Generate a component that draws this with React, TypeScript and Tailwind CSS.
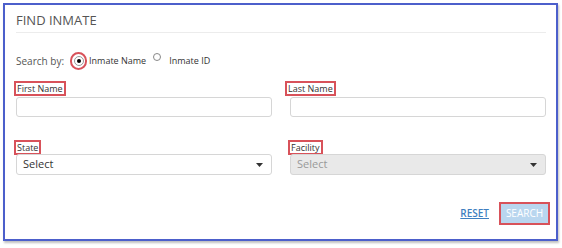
import React from "react";

const font = { fontFamily: '"Open Sans", "Noto Sans", sans-serif' };

const Caret = () => (
  <svg width="7" height="4" viewBox="0 0 7 4" className="shrink-0">
    <path d="M0 0 H7 L3.5 4 Z" fill="#333" />
  </svg>
);

const Label = ({ text }: { text: string }) => (
  <div className="flex">
    <span className="-ml-[2px] border-2 border-[#d8525a] px-[1px] text-[9px] leading-[11px] text-[#333]">
      {text}
    </span>
  </div>
);

export default function App() {
  return (
    <div className="h-[248px] w-[562px] bg-white pl-[3px] pt-[3px]" style={font}>
      <div className="flex h-[238px] w-[555px] flex-col border-2 border-[#4c5fcb] pl-[11px] pr-[10px] shadow-[1px_2px_2px_rgba(0,0,0,0.25)]">
        <div className="flex h-[28px] items-end border-b border-[#ececec] pb-[4px] text-[13px] leading-[16px] text-[#555]">
          FIND INMATE
        </div>

        <div className="mt-[19px] flex h-[18px] items-center text-[10px] text-[#555]">
          <span>Search by:</span>
          <span className="ml-[6px] flex h-[18px] w-[17px] items-center justify-center rounded-full border-2 border-[#d8525a]">
            <span className="flex h-[10px] w-[10px] items-center justify-center rounded-full border border-[#999] bg-white">
              <span className="h-[4px] w-[4px] rounded-full bg-black" />
            </span>
          </span>
          <span className="ml-[2px] text-[9px] text-[#333]">Inmate Name</span>
          <span className="mb-[9px] ml-[7px] h-[8px] w-[8px] rounded-full border border-[#888]" />
          <span className="ml-[8px] text-[9px] text-[#333]">Inmate ID</span>
        </div>

        <div className="mt-[11px] grid grid-cols-2 gap-x-[18px]">
          <div className="flex flex-col">
            <Label text="First Name" />
            <div className="mt-[1px] h-[20px] rounded-[3px] border border-[#d6d6d6] bg-white" />
          </div>
          <div className="flex flex-col">
            <div className="-ml-[3px]">
              <Label text="Last Name" />
            </div>
            <div className="mt-[1px] h-[20px] rounded-[3px] border border-[#d6d6d6] bg-white" />
          </div>
        </div>

        <div className="mt-[23px] grid grid-cols-2 gap-x-[18px]">
          <div className="flex flex-col">
            <Label text="State" />
            <div className="-mt-[1px] flex h-[21px] items-center justify-between rounded-[3px] border border-[#d6d6d6] bg-white pl-[6px] pr-[8px]">
              <span className="text-[11px] text-[#333]">Select</span>
              <Caret />
            </div>
          </div>
          <div className="flex flex-col">
            <Label text="Facility" />
            <div className="-mt-[1px] flex h-[21px] items-center justify-between rounded-[3px] border border-[#d6d6d6] bg-[#e9e9e9] pl-[6px] pr-[8px]">
              <span className="text-[11px] text-[#999]">Select</span>
              <Caret />
            </div>
          </div>
        </div>

        <div className="-mr-[4px] mt-[27px] flex items-center justify-end gap-[10px]">
          <span className="text-[10px] font-semibold text-[#3f7fc0] underline">RESET</span>
          <span className="flex h-[23px] w-[51px] items-center justify-center border-2 border-[#d8525a] bg-[#b9d6ef] text-[10px] text-white">
            SEARCH
          </span>
        </div>
      </div>
    </div>
  );
}
